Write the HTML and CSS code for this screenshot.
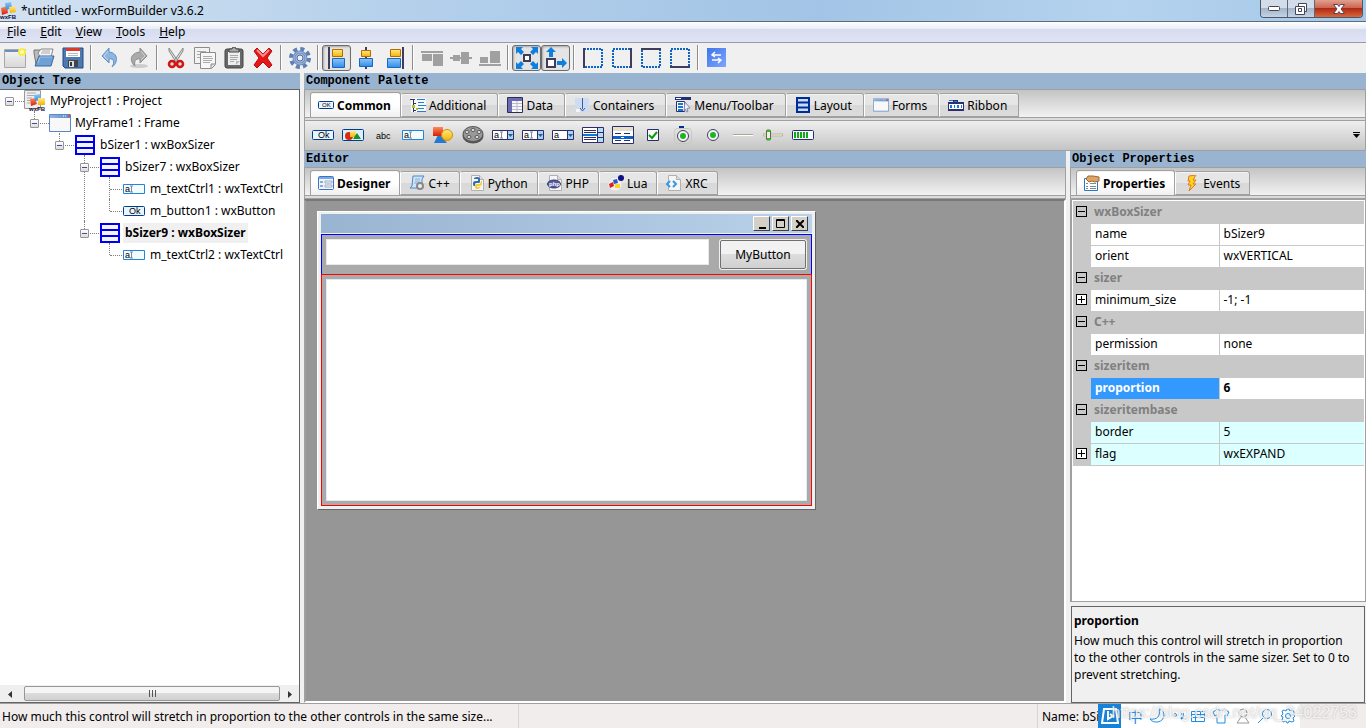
FILE: index.html
```html
<!DOCTYPE html>
<html lang="en">
<head>
  <meta charset="UTF-8">
  <meta name="viewport" content="width=device-width, initial-scale=1.0">
  <title>*untitled - wxFormBuilder v3.6.2</title>
  <link rel="stylesheet" href="styles.css">
</head>
<body>

  <!-- Icon sprite -->
  <svg class="sprite" width="0" height="0" aria-hidden="true">
    <defs>
      <linearGradient id="gBlue" x1="0" y1="0" x2="0" y2="1"><stop offset="0" stop-color="#8fc6f8"/><stop offset="1" stop-color="#2f8de8"/></linearGradient>
      <linearGradient id="gGold" x1="0" y1="0" x2="0" y2="1"><stop offset="0" stop-color="#ffe98a"/><stop offset="1" stop-color="#f5b400"/></linearGradient>
      <linearGradient id="gRed" x1="0" y1="0" x2="0" y2="1"><stop offset="0" stop-color="#ff8a5c"/><stop offset="1" stop-color="#d81e05"/></linearGradient>
      <linearGradient id="gPaper" x1="0" y1="0" x2="0" y2="1"><stop offset="0" stop-color="#f4f4f4"/><stop offset="1" stop-color="#d8d8d8"/></linearGradient>
      <linearGradient id="gWin" x1="0" y1="0" x2="1" y2="0"><stop offset="0" stop-color="#8fb4e0"/><stop offset="1" stop-color="#5c8cd0"/></linearGradient>
      <linearGradient id="gSwap" x1="0" y1="0" x2="1" y2="1"><stop offset="0" stop-color="#3f74e8"/><stop offset="1" stop-color="#7da6ff"/></linearGradient>
    </defs>
    <symbol id="logo" viewBox="0 0 18 18">
      <path d="M1 6l6-2 1 7-6 2z" fill="url(#gRed)"/><path d="M5 1l6-1 1 6-6 2z" fill="url(#gBlue)"/><path d="M9 5l6-1 1 6-6 1z" fill="url(#gGold)"/>
      <text x="0" y="17" class="logo-text">wxFB</text>
    </symbol>
    <symbol id="project" viewBox="0 0 22 22">
      <path d="M.5.500h16v18H.5z" fill="#eee" stroke="#999"/><path d="M3 3h9M3 5.500h11M3 8h5M3 10.500h3M3 13h3" stroke="#aaa"/>
      <path d="M6 9l5-1 2 6-6 2z" fill="url(#gRed)"/><path d="M10 5l6-1 1 6-6 1z" fill="url(#gBlue)"/><path d="M14 8h7v7h-7z" fill="url(#gGold)"/>
      <text x="5" y="21" class="logo-text">wxFB</text>
    </symbol>
    <symbol id="new" viewBox="0 0 22 20">
      <path d="M.5 1.500h21v18H.5z" fill="url(#gPaper)" stroke="#a8a8a8"/><path d="M1 2h17v2H1z" fill="#6c8fc0"/><circle cx="18" cy="4" r="4" fill="#f6ee4c"/><circle cx="18" cy="4" r="2" fill="#fffbb0"/>
    </symbol>
    <symbol id="open" viewBox="0 0 22 20">
      <path d="M1 5V2h6l1 2h3v12H3z" fill="#bbb" stroke="#777"/><path d="M5 5l3-4h12l-2 8H7z" fill="#f5f5f5" stroke="#888"/><path d="M9 3h8M8 5h9" stroke="#aaa"/><path d="M2 18l4-10h15l-3 10z" fill="#6fa0d4" stroke="#39699f"/><path d="M5 15l2-6h12" fill="none" stroke="#a4c6e8"/>
    </symbol>
    <symbol id="save" viewBox="0 0 22 22">
      <path d="M1 1h20v20H3l-2-2z" fill="#5079b0" stroke="#204a87"/><path d="M4 1h14v9H4z" fill="#fff"/><path d="M4 1h14v3H4z" fill="#dc3a2c"/><path d="M6 6.500h10M6 8.500h10" stroke="#bbb"/><path d="M6 13h10v7H6z" fill="#444"/><path d="M7 14h5v6H7z" fill="#ddd"/><path d="M8 15h2v4H8z" fill="#333"/>
    </symbol>
    <symbol id="undo" viewBox="0 0 20 22">
      <path d="M9 1L2 9l7 7v-4c5-1 6 3 3 8 6-4 7-14-3-15z" fill="#8fb5df" stroke="#5d8fc8"/><path d="M8 4L4 9l4 4" fill="none" stroke="#c4daf2"/>
    </symbol>
    <symbol id="redo" viewBox="0 0 22 22">
      <ellipse cx="11" cy="19" rx="9" ry="2" fill="#ccc"/><path d="M12 1l7 8-7 7v-4c-5-1-6 3-5 7-6-5-5-13 5-14z" fill="#aaa" stroke="#8b8b8b"/><path d="M13 4l4 5-4 4" fill="none" stroke="#d0d0d0"/>
    </symbol>
    <symbol id="cut" viewBox="0 0 20 22">
      <path d="M3 1l9 13-2 1L3 4zM17 1L8 14l2 1 7-11z" fill="#ddd" stroke="#888"/><ellipse cx="6" cy="17" rx="3" ry="3" fill="#f3d3d3" stroke="#cf1717" stroke-width="2.500"/><ellipse cx="14" cy="17" rx="3" ry="3" fill="#f3d3d3" stroke="#cf1717" stroke-width="2.500"/>
    </symbol>
    <symbol id="copy" viewBox="0 0 22 22">
      <path d="M.5.500h15v16H.5z" fill="#f2f2f2" stroke="#8c8c8c"/><path d="M3 4.500h9M3 7.500h3M3 10.500h3" stroke="#aaa"/><path d="M6.500 5.500h15v12l-4 4h-11z" fill="#f7f7f7" stroke="#8c8c8c"/><path d="M9 9.500h9M9 11.500h10M9 13.500h9M9 15.500h7" stroke="#aaa"/><path d="M17 21v-4h4" fill="#ddd" stroke="#8c8c8c"/>
    </symbol>
    <symbol id="paste" viewBox="0 0 20 22">
      <rect x="1" y="2" width="18" height="19" rx="2" fill="#686868" stroke="#444"/><path d="M4 5h12v13H4z" fill="#eee"/><path d="M6 8.500h8M6 10.500h8M6 12.500h7M6 14.500h4" stroke="#aaa"/><path d="M5 5V2h3l1-2h2l1 2h3v3z" fill="#aaa" stroke="#444"/><path d="M12 18v-4h4z" fill="#bbb"/>
    </symbol>
    <symbol id="delete" viewBox="0 0 20 22">
      <path d="M4 1l6 6 6-6 3 3-5 7 5 7-3 3-6-6-6 6-3-3 5-7-5-7z" fill="#e81717" stroke="#b50e0e"/><path d="M4 3l6 6 6-6" fill="none" stroke="#ff8f8f" stroke-width="2"/>
    </symbol>
    <symbol id="gear" viewBox="0 0 22 22">
      <circle cx="11" cy="11" r="9" fill="none" stroke="#5f7fb5" stroke-width="4" stroke-dasharray="4 3.070"/><circle cx="11" cy="11" r="6" fill="#a9bddd" stroke="#6d8cc0" stroke-width="3"/><circle cx="11" cy="11" r="6" fill="none" stroke="#a9bddd"/><circle cx="11" cy="11" r="3" fill="#f0f0f0" stroke="#4a6aa0"/>
    </symbol>
    <symbol id="al-left" viewBox="0 0 20 22"><path d="M2 0v22" stroke="#403c5c" stroke-width="2"/><path d="M5.500 2.500h10v7h-10z" fill="url(#gGold)" stroke="#b96a00"/><path d="M5.500 11.500h12v9h-12z" fill="url(#gBlue)" stroke="#1768c0"/></symbol>
    <symbol id="al-center" viewBox="0 0 20 22"><path d="M10 0v22" stroke="#403c5c" stroke-width="2"/><path d="M5.500 3.500h9v6h-9z" fill="url(#gGold)" stroke="#b96a00"/><path d="M3.500 11.500h13v8h-13z" fill="url(#gBlue)" stroke="#1768c0"/></symbol>
    <symbol id="al-right" viewBox="0 0 20 22"><path d="M18 0v22" stroke="#403c5c" stroke-width="2"/><path d="M5.500 2.500h10v7h-10z" fill="url(#gGold)" stroke="#b96a00"/><path d="M2.500 11.500h13v9h-13z" fill="url(#gBlue)" stroke="#1768c0"/></symbol>
    <symbol id="al-top" viewBox="0 0 22 22"><path d="M0 4h22v2H0zM1 7h10v7H1zM12 7h10v12H12z" fill="#a0a0a0"/></symbol>
    <symbol id="al-mid" viewBox="0 0 22 22"><path d="M0 10h22v2H0zM3 8h7v6H3zM11 5h8v12h-8z" fill="#a0a0a0"/></symbol>
    <symbol id="al-bottom" viewBox="0 0 22 22"><path d="M0 17h22v2H0zM1 10h8v6H1zM11 4h10v12H11z" fill="#a0a0a0"/></symbol>
    <symbol id="expand" viewBox="0 0 24 24">
      <path d="M9 9h6v6H9z" fill="#fff" stroke="#403c5c" stroke-width="2"/><path d="M1 1h7L6 3l3 3-3 3-3-3-2 2zM23 1v7l-2-2-3 3-3-3 3-3-2-2zM1 23v-7l2 2 3-3 3 3-3 3 2 2zM23 23h-7l2-2-3-3 3-3 3 3 2-2z" fill="#0d7fdc"/>
    </symbol>
    <symbol id="stretch" viewBox="0 0 24 24">
      <path d="M3 13h8v8H3z" fill="#fff" stroke="#403c5c" stroke-width="2"/><path d="M7 1l5 5H9v5H5V6H2zM23 17l-5 5v-3h-5v-4h5v-3z" fill="#0d7fdc"/>
    </symbol>
    <symbol id="dots" viewBox="0 0 20 20"><path d="M1 1h18v18H1z" fill="none" stroke="#0d62c8" stroke-width="2" stroke-dasharray="2 1"/></symbol>
    <symbol id="b-left" viewBox="0 0 20 20"><use href="#dots"/><path d="M1 0v20" stroke="#403c5c" stroke-width="2"/></symbol>
    <symbol id="b-right" viewBox="0 0 20 20"><use href="#dots"/><path d="M19 0v20" stroke="#403c5c" stroke-width="2"/></symbol>
    <symbol id="b-top" viewBox="0 0 20 20"><use href="#dots"/><path d="M0 1h20" stroke="#403c5c" stroke-width="2"/></symbol>
    <symbol id="b-bottom" viewBox="0 0 20 20"><use href="#dots"/><path d="M0 19h20" stroke="#403c5c" stroke-width="2"/></symbol>
    <symbol id="swap" viewBox="0 0 19 19"><path d="M0 0h19v19H0z" fill="url(#gSwap)"/><path d="M5 7h9M8 4L5 7l3 2M14 12H5M11 10l3 2-3 3" fill="none" stroke="#fff" stroke-width="1.500"/></symbol>

    <symbol id="frame" viewBox="0 0 22 18"><path d="M.5.500h21v17H.5z" fill="#f8f8f8" stroke="#5a86c4"/><path d="M1 1h20v3H1z" fill="url(#gWin)"/><path d="M14 2h1M16 2h1" stroke="#fff"/><path d="M19 1h2v2h-2z" fill="#e8502c"/></symbol>
    <symbol id="sizer" viewBox="0 0 20 20"><path d="M1 1h18v18H1zM1 7h18M1 13h18" fill="#f4f4ff" stroke="#0000f0" stroke-width="2"/></symbol>
    <symbol id="sizer-sm" viewBox="0 0 16 16"><path d="M2 1h12v14H2zM2 5.500h12M2 10.500h12" fill="#c8dcff" stroke="#002c96" stroke-width="2"/></symbol>
    <symbol id="ok" viewBox="0 0 22 10"><rect x=".5" y=".5" width="21" height="9" rx="1" fill="#e8f4ff" stroke="#003c8c"/><text x="6" y="8" class="glyph">Ok</text></symbol>
    <symbol id="ok-sm" viewBox="0 0 16 8"><rect x=".5" y=".5" width="15" height="7" rx="1" fill="#e8f4ff" stroke="#003c8c"/><text x="4" y="6" class="glyph-sm">OK</text></symbol>
    <symbol id="textctrl" viewBox="0 0 22 10"><path d="M.5.500h21v9H.5z" fill="#f4fbff" stroke="#1e86dc"/><text x="2" y="8" class="glyph">a</text><path d="M7 2l3 0M8.500 2v6M7 8h3" stroke="#888"/></symbol>
    <symbol id="bitmapbtn" viewBox="0 0 22 12"><rect x=".5" y=".5" width="21" height="11" rx="1" fill="#dcefff" stroke="#003c8c"/><circle cx="7" cy="7" r="4" fill="#d82c10"/><path d="M8 2h6v6H8z" fill="url(#gGold)"/><path d="M15 4l4 6h-8z" fill="#1c9020"/></symbol>
    <symbol id="abc" viewBox="0 0 22 12"><text x="4" y="10" class="glyph">abc</text></symbol>
    <symbol id="bitmap" viewBox="0 0 22 18"><path d="M7 7l8 10H2z" fill="#2478d8"/><path d="M1 1h10v9H1z" fill="url(#gRed)"/><circle cx="15" cy="9" r="5.500" fill="url(#gGold)" stroke="#d09000"/></symbol>
    <symbol id="reel" viewBox="0 0 22 18"><ellipse cx="11" cy="10" rx="10.500" ry="7.500" fill="#555"/><ellipse cx="11" cy="8" rx="10" ry="7.500" fill="#999" stroke="#555"/><g fill="#eee" stroke="#555"><ellipse cx="11" cy="4" rx="2" ry="1.500"/><ellipse cx="5" cy="6" rx="2" ry="1.500"/><ellipse cx="17" cy="6" rx="2" ry="1.500"/><ellipse cx="7" cy="11" rx="2" ry="1.500"/><ellipse cx="15" cy="11" rx="2" ry="1.500"/></g></symbol>
    <symbol id="combo" viewBox="0 0 22 10"><path d="M.5.500h21v9H.5z" fill="#fff" stroke="#2c2c6c"/><path d="M15 1h6v8h-6z" fill="#a8d4f4"/><path d="M15.500 1v8" stroke="#2c2c6c"/><path d="M16 4h5l-2.500 3z" fill="#2c5c8c"/><text x="2" y="8" class="glyph">a</text><path d="M8 2h3M9.500 2v6M8 8h3" stroke="#888"/></symbol>
    <symbol id="choice" viewBox="0 0 22 10"><path d="M.5.500h21v9H.5z" fill="#fff" stroke="#2c2c6c"/><path d="M15 1h6v8h-6z" fill="#a8d4f4"/><path d="M15.500 1v8" stroke="#2c2c6c"/><path d="M16 4h5l-2.500 3z" fill="#2c5c8c"/><text x="2" y="8" class="glyph">a</text></symbol>
    <symbol id="listbox" viewBox="0 0 22 16"><path d="M.5.500h21v15H.5z" fill="#fff" stroke="#2c2c6c"/><path d="M2 3.500h12M2 5.500h12M2 10.500h12M2 12.500h12" stroke="#2c2c6c"/><path d="M1 7h14v2H1z" fill="#0c78d8"/><path d="M15 1h6v14h-6z" fill="#b8dcf4"/><path d="M15.500 1v14M15 5.500h6M15 10.500h6" stroke="#2c2c6c"/></symbol>
    <symbol id="listctrl" viewBox="0 0 22 18"><path d="M.5.500h21v17H.5z" fill="#fff" stroke="#2c2c6c"/><path d="M1 1h20v4H1z" fill="#e4e0cc"/><path d="M3 7.500h6M12 7.500h6M3 14.500h6M12 14.500h6" stroke="#2c2c6c"/><path d="M1 10h20v3H1z" fill="#0c62c8"/><path d="M9 11.500h3" stroke="#fff"/></symbol>
    <symbol id="check" viewBox="0 0 12 12"><path d="M.5.500h11v11H.5z" fill="#f8f8f8" stroke="#2c2c6c"/><path d="M2 6l3 3 5-6" fill="none" stroke="#0b9a10" stroke-width="2"/></symbol>
    <symbol id="radiobox" viewBox="0 0 18 18"><rect x=".5" y="2.500" width="17" height="15" rx="3" fill="none" stroke="#ccc8b4"/><path d="M5 0h5v2H5z" fill="#002c96"/><circle cx="9" cy="10" r="5.500" fill="#f4f4f4" stroke="#3c3c6c"/><circle cx="9" cy="10" r="3" fill="#1fb420"/></symbol>
    <symbol id="radio" viewBox="0 0 12 12"><circle cx="6" cy="6" r="5.500" fill="#f4f4f4" stroke="#3c3c6c"/><circle cx="6" cy="6" r="3" fill="#1fb420"/></symbol>
    <symbol id="line" viewBox="0 0 20 2"><path d="M0 .5h20" stroke="#aca899"/><path d="M0 1.500h20" stroke="#fff"/></symbol>
    <symbol id="slider" viewBox="0 0 22 12"><path d="M1 6h20" stroke="#bab8a0" stroke-width="3"/><path d="M2 6h18" stroke="#f0eedc"/><rect x="4.500" y="1" width="4" height="10" rx="1" fill="#eee" stroke="#5c6c3c"/><path d="M5 2h3M5 10h3" stroke="#30c020" stroke-width="2"/></symbol>
    <symbol id="gauge" viewBox="0 0 22 10"><rect x=".5" y=".5" width="21" height="9" rx="1" fill="#f4f8ff" stroke="#2c2c6c"/><path d="M3 2v6M6 2v6M9 2v6M12 2v6M15 2v6" stroke="#15a815" stroke-width="2"/></symbol>

    <symbol id="tree" viewBox="0 0 16 16"><path d="M1 1h15v14H1z" fill="#f4f9ff"/><path d="M0 2.500h5M3.500 2v13M3 6.500h3M3 13.500h3" stroke="#335" fill="none"/><path d="M7 2.500h8M8 5.500h6M8 8.500h8M7 11.500h7M7 14.500h9" stroke="#2c7cc0"/><path d="M2 8h3v3H2zM6 11h2v2H6z" fill="#b8c020"/></symbol>
    <symbol id="grid" viewBox="0 0 16 16"><path d="M.5.500h15v15H.5z" fill="#f8f8ff" stroke="#302c50"/><path d="M1 1h14v3H1zM1 4h4v11H1z" fill="#6b6bb4"/><path d="M5 6.500h10M5 9.500h10M5 12.500h10M10 4v11" stroke="#bbc"/></symbol>
    <symbol id="splitter" viewBox="0 0 16 16"><path d="M1 1h14v14H1z" fill="#cddcf0"/><path d="M8.500 1v11" stroke="#3c5c9c"/><path d="M6 11l2.500 3 2.500-3" fill="none" stroke="#3c5c9c"/><path d="M2 12h4v3H2z" fill="#f4f4f4"/></symbol>
    <symbol id="menu" viewBox="0 0 16 16"><path d="M0 0h16v3H0z" fill="#203070"/><path d="M1 1h5v1H1z" fill="#fff"/><path d="M1.500 4.500h8v10h-8z" fill="#fff" stroke="#203070"/><path d="M3 7h5M3 10h5M3 13h5" stroke="#1c78d0" stroke-width="2"/><path d="M10 5l5 6-3 .5 1 3-1.500.5-1-3-1.500 2z" fill="#eef" stroke="#88a"/></symbol>
    <symbol id="ribbon" viewBox="0 0 16 12"><path d="M0 3h5V1h5v2h6v9H0z" fill="#302c70"/><path d="M1 1h4v1H1zM6 2h3v1H6z" fill="#1478e0"/><path d="M1 5h14v5H1z" fill="#fff"/><path d="M2 6h2v3H2zM6 6h1v3H6zM9 6h2v3H9zM13 6h1v3h-1z" fill="#1478e0"/></symbol>
    <symbol id="designer" viewBox="0 0 16 14"><rect x=".5" y=".5" width="15" height="13" rx="1" fill="#eef5ff" stroke="#3c72c0"/><path d="M1 1h14v2H1z" fill="#7aa8e4"/><path d="M2 6h3M2 10h3" stroke="#2c62b0"/><path d="M7 5h7v2H7zM7 9h7v2H7z" fill="#fff" stroke="#9ab"/></symbol>
    <symbol id="script" viewBox="0 0 16 16"><path d="M4 1h11l-2 3v9H1l2-2z" fill="#cfe4f8" stroke="#4f88c4"/><path d="M6 4h5M6 6h5M5 8h5" stroke="#8ab0d8"/><circle cx="11" cy="11" r="3" fill="#eee" stroke="#888" stroke-width="2"/></symbol>
    <symbol id="page" viewBox="0 0 16 16"><path d="M2.500.500h8l4 4v11h-12z" fill="#f5f5f5" stroke="#b0b0b0"/><path d="M10.500.500v4h4" fill="#ddd" stroke="#b0b0b0"/></symbol>
    <symbol id="python" viewBox="0 0 16 16"><use href="#page"/><path d="M4 9c0-3 1-3 5-3V4H5V3c3-2 6-1 6 1v3c0 1-1 1-4 1-1 0-1 2-1 3-1 0-2 0-2-2z" fill="#2f6fae"/><path d="M13 7c0 4-1 4-5 4v1h3v1c-3 2-5 1-5-1v-2c0-1 1-1 4-1 1 0 2-1 2-3 1 0 1 0 1 1z" fill="#f8cc30"/></symbol>
    <symbol id="php" viewBox="0 0 16 16"><use href="#page"/><ellipse cx="7" cy="9" rx="6.500" ry="4" fill="#555a9c" stroke="#35356c"/><text x="2" y="11" class="php-text">php</text></symbol>
    <symbol id="lua" viewBox="0 0 16 16"><circle cx="7" cy="9" r="7" fill="#f0f0f0" stroke="#ddd"/><circle cx="13" cy="3" r="3" fill="#101084"/><path d="M1 9l4-2 1 4-4 2z" fill="#e02020"/><path d="M5 5l4-1 1 4-4 1z" fill="#2858d0"/><path d="M7 9h5v4H7z" fill="#f8d820"/></symbol>
    <symbol id="xrc" viewBox="0 0 16 16"><use href="#page"/><path d="M4 6L1 9l3 3M7 6l3 3-3 3" fill="none" stroke="#3898e8" stroke-width="2"/></symbol>
    <symbol id="props" viewBox="0 0 16 16"><path d="M.5 3.500h13v12H.5z" fill="#fff" stroke="#2c78c0"/><path d="M2 8.500h2M6 8.500h6M2 11.500h2M6 11.500h6M2 13.500h2M6 13.500h6" stroke="#789"/><path d="M4 1l5 0 6 1v4l-4 1-3-1-3 1-3-3z" fill="#dca468" stroke="#9c6830"/></symbol>
    <symbol id="bolt" viewBox="0 0 16 16"><path d="M5 1l7-1-3 5h3L9 9h3l-7 7 2-6H4l2-4H4z" fill="#ffd21e" stroke="#e07a20"/></symbol>
  </svg>

  <header class="titlebar">
    <svg class="app-icon" width="18" height="18"><use href="#logo"/></svg>
    <h1>*untitled - wxFormBuilder v3.6.2</h1>
    <div class="window-btns">
      <button class="win-min" aria-label="Minimize"><svg width="12" height="5"><rect x=".5" y=".5" width="11" height="4" rx="1" fill="#fff" stroke="#445"/></svg></button>
      <button class="win-max" aria-label="Restore"><svg width="12" height="12"><path d="M3.500.500h8v8h-2v3h-9v-8h3z" fill="#fff" stroke="#445"/><path d="M3.500 5.500h3v3h-3zM3 3.500h6.500V9" fill="none" stroke="#445"/></svg></button>
      <button class="win-close" aria-label="Close"><svg width="12" height="10"><path d="M.5.500h4L6 2.500 7.500.500h4L8 5l3.500 4.500h-4L6 7.500 4.500 9.500h-4L4 5z" fill="#fff" stroke="#545"/></svg></button>
    </div>
  </header>

  <nav class="menubar">
    <a href="#"><u>F</u>ile</a>
    <a href="#"><u>E</u>dit</a>
    <a href="#"><u>V</u>iew</a>
    <a href="#"><u>T</u>ools</a>
    <a href="#"><u>H</u>elp</a>
  </nav>

  <div class="toolbar">
    <button aria-label="New"><svg width="22" height="20"><use href="#new"/></svg></button>
    <button aria-label="Open"><svg width="22" height="20"><use href="#open"/></svg></button>
    <button aria-label="Save"><svg width="22" height="22"><use href="#save"/></svg></button>
    <span class="sep"></span>
    <button aria-label="Undo"><svg width="20" height="22"><use href="#undo"/></svg></button>
    <button aria-label="Redo"><svg width="22" height="22"><use href="#redo"/></svg></button>
    <span class="sep"></span>
    <button aria-label="Cut"><svg width="20" height="22"><use href="#cut"/></svg></button>
    <button aria-label="Copy"><svg width="22" height="22"><use href="#copy"/></svg></button>
    <button aria-label="Paste"><svg width="20" height="22"><use href="#paste"/></svg></button>
    <button aria-label="Delete"><svg width="20" height="22"><use href="#delete"/></svg></button>
    <span class="sep"></span>
    <button aria-label="Generate code"><svg width="22" height="22"><use href="#gear"/></svg></button>
    <span class="sep"></span>
    <button class="pressed" aria-label="Align left"><svg width="20" height="22"><use href="#al-left"/></svg></button>
    <button aria-label="Align center"><svg width="20" height="22"><use href="#al-center"/></svg></button>
    <button aria-label="Align right"><svg width="20" height="22"><use href="#al-right"/></svg></button>
    <span class="sep"></span>
    <button disabled aria-label="Align top"><svg width="22" height="22"><use href="#al-top"/></svg></button>
    <button disabled aria-label="Align middle"><svg width="22" height="22"><use href="#al-mid"/></svg></button>
    <button disabled aria-label="Align bottom"><svg width="22" height="22"><use href="#al-bottom"/></svg></button>
    <span class="sep"></span>
    <button class="pressed" aria-label="Expand"><svg width="24" height="24"><use href="#expand"/></svg></button>
    <button class="pressed" aria-label="Stretch"><svg width="24" height="24"><use href="#stretch"/></svg></button>
    <span class="sep"></span>
    <button aria-label="Left border"><svg width="20" height="20"><use href="#b-left"/></svg></button>
    <button aria-label="Right border"><svg width="20" height="20"><use href="#b-right"/></svg></button>
    <button aria-label="Top border"><svg width="20" height="20"><use href="#b-top"/></svg></button>
    <button aria-label="Bottom border"><svg width="20" height="20"><use href="#b-bottom"/></svg></button>
    <span class="sep"></span>
    <button aria-label="Swap"><svg width="19" height="19"><use href="#swap"/></svg></button>
  </div>

  <main class="workspace">

    <!-- Object tree -->
    <section class="tree-pane">
      <h2 class="caption">Object Tree</h2>
      <div class="tree-box">
        <ul class="tree">
          <li>
            <div class="node"><button class="twist" aria-label="Collapse"></button><svg width="22" height="22"><use href="#project"/></svg><span>MyProject1 : Project</span></div>
            <ul>
              <li>
                <div class="node"><button class="twist" aria-label="Collapse"></button><svg width="22" height="18"><use href="#frame"/></svg><span>MyFrame1 : Frame</span></div>
                <ul>
                  <li>
                    <div class="node"><button class="twist" aria-label="Collapse"></button><svg width="22" height="20"><use href="#sizer"/></svg><span>bSizer1 : wxBoxSizer</span></div>
                    <ul>
                      <li>
                        <div class="node"><button class="twist" aria-label="Collapse"></button><svg width="22" height="20"><use href="#sizer"/></svg><span>bSizer7 : wxBoxSizer</span></div>
                        <ul>
                          <li><div class="node leaf"><svg width="22" height="10"><use href="#textctrl"/></svg><span>m_textCtrl1 : wxTextCtrl</span></div></li>
                          <li><div class="node leaf"><svg width="22" height="10"><use href="#ok"/></svg><span>m_button1 : wxButton</span></div></li>
                        </ul>
                      </li>
                      <li>
                        <div class="node selected"><button class="twist" aria-label="Collapse"></button><svg width="22" height="20"><use href="#sizer"/></svg><span>bSizer9 : wxBoxSizer</span></div>
                        <ul>
                          <li><div class="node leaf"><svg width="22" height="10"><use href="#textctrl"/></svg><span>m_textCtrl2 : wxTextCtrl</span></div></li>
                        </ul>
                      </li>
                    </ul>
                  </li>
                </ul>
              </li>
            </ul>
          </li>
        </ul>
        <div class="hscroll">
          <button aria-label="Scroll left"><svg width="4" height="7"><path d="M4 0v7L0 3.500z" fill="#333"/></svg></button>
          <div class="thumb"><i></i><i></i><i></i></div>
          <button aria-label="Scroll right"><svg width="4" height="7"><path d="M0 0v7l4-3.500z" fill="#333"/></svg></button>
        </div>
      </div>
    </section>

    <div class="right-side">

      <!-- Component palette -->
      <section class="palette">
        <h2 class="caption">Component Palette</h2>
        <div class="tabs">
          <button class="tab active"><svg width="16" height="8"><use href="#ok-sm"/></svg>Common</button>
          <button class="tab"><svg width="16" height="16"><use href="#tree"/></svg>Additional</button>
          <button class="tab"><svg width="16" height="16"><use href="#grid"/></svg>Data</button>
          <button class="tab"><svg width="16" height="16"><use href="#splitter"/></svg>Containers</button>
          <button class="tab"><svg width="16" height="16"><use href="#menu"/></svg>Menu/Toolbar</button>
          <button class="tab"><svg width="16" height="16"><use href="#sizer-sm"/></svg>Layout</button>
          <button class="tab"><svg width="16" height="14"><use href="#frame"/></svg>Forms</button>
          <button class="tab"><svg width="16" height="12"><use href="#ribbon"/></svg>Ribbon</button>
        </div>
        <div class="widgets">
          <button aria-label="wxButton"><svg width="22" height="10"><use href="#ok"/></svg></button>
          <button aria-label="wxBitmapButton"><svg width="22" height="12"><use href="#bitmapbtn"/></svg></button>
          <button aria-label="wxStaticText"><svg width="22" height="12"><use href="#abc"/></svg></button>
          <button aria-label="wxTextCtrl"><svg width="22" height="10"><use href="#textctrl"/></svg></button>
          <button aria-label="wxStaticBitmap"><svg width="22" height="18"><use href="#bitmap"/></svg></button>
          <button aria-label="wxAnimationCtrl"><svg width="22" height="18"><use href="#reel"/></svg></button>
          <button aria-label="wxComboBox"><svg width="22" height="10"><use href="#combo"/></svg></button>
          <button aria-label="wxBitmapComboBox"><svg width="22" height="10"><use href="#combo"/></svg></button>
          <button aria-label="wxChoice"><svg width="22" height="10"><use href="#choice"/></svg></button>
          <button aria-label="wxListBox"><svg width="22" height="16"><use href="#listbox"/></svg></button>
          <button aria-label="wxListCtrl"><svg width="22" height="18"><use href="#listctrl"/></svg></button>
          <button aria-label="wxCheckBox"><svg width="12" height="12"><use href="#check"/></svg></button>
          <button aria-label="wxRadioBox"><svg width="18" height="18"><use href="#radiobox"/></svg></button>
          <button aria-label="wxRadioButton"><svg width="12" height="12"><use href="#radio"/></svg></button>
          <button aria-label="wxStaticLine"><svg width="20" height="2"><use href="#line"/></svg></button>
          <button aria-label="wxSlider"><svg width="22" height="12"><use href="#slider"/></svg></button>
          <button aria-label="wxGauge"><svg width="22" height="10"><use href="#gauge"/></svg></button>
          <button class="more" aria-label="More"><svg width="7" height="6"><path d="M0 0h7v1H0zM0 2h7L3.500 6z" fill="#000"/></svg></button>
        </div>
      </section>

      <div class="lower">

        <!-- Editor -->
        <section class="editor">
          <h2 class="caption">Editor</h2>
          <div class="tabs">
            <button class="tab active"><svg width="16" height="14"><use href="#designer"/></svg>Designer</button>
            <button class="tab"><svg width="16" height="16"><use href="#script"/></svg>C++</button>
            <button class="tab"><svg width="16" height="16"><use href="#python"/></svg>Python</button>
            <button class="tab"><svg width="16" height="16"><use href="#php"/></svg>PHP</button>
            <button class="tab"><svg width="16" height="16"><use href="#lua"/></svg>Lua</button>
            <button class="tab"><svg width="16" height="16"><use href="#xrc"/></svg>XRC</button>
          </div>
          <div class="canvas">
            <div class="form">
              <div class="form-title">
                <button aria-label="Minimize form"><svg width="8" height="10"><path d="M1 8h7v2H1z"/></svg></button>
                <button aria-label="Maximize form"><svg width="9" height="9"><path d="M.5.500h8v8h-8zM0 1.500h9" fill="none" stroke="#000"/></svg></button>
                <button aria-label="Close form"><svg width="8" height="8"><path d="M0 0l8 8M8 0L0 8" stroke="#000" stroke-width="2"/></svg></button>
              </div>
              <div class="sizer-h">
                <input type="text" aria-label="m_textCtrl1">
                <button>MyButton</button>
              </div>
              <div class="sizer-v">
                <textarea aria-label="m_textCtrl2"></textarea>
              </div>
            </div>
          </div>
        </section>

        <!-- Properties -->
        <section class="inspector">
          <h2 class="caption">Object Properties</h2>
          <div class="tabs">
            <button class="tab active"><svg width="16" height="16"><use href="#props"/></svg>Properties</button>
            <button class="tab"><svg width="16" height="16"><use href="#bolt"/></svg>Events</button>
          </div>
          <div class="grid-box">
            <table class="props">
              <colgroup><col class="col-mark"><col class="col-name"><col></colgroup>
              <tr class="group"><td><button class="box" aria-label="Collapse"></button></td><th colspan="2">wxBoxSizer</th></tr>
              <tr><td></td><th>name</th><td>bSizer9</td></tr>
              <tr><td></td><th>orient</th><td>wxVERTICAL</td></tr>
              <tr class="group"><td><button class="box" aria-label="Collapse"></button></td><th colspan="2">sizer</th></tr>
              <tr><td><button class="box plus" aria-label="Expand"></button></td><th>minimum_size</th><td>-1; -1</td></tr>
              <tr class="group"><td><button class="box" aria-label="Collapse"></button></td><th colspan="2">C++</th></tr>
              <tr><td></td><th>permission</th><td>none</td></tr>
              <tr class="group"><td><button class="box" aria-label="Collapse"></button></td><th colspan="2">sizeritem</th></tr>
              <tr class="current"><td></td><th>proportion</th><td>6</td></tr>
              <tr class="group"><td><button class="box" aria-label="Collapse"></button></td><th colspan="2">sizeritembase</th></tr>
              <tr class="tinted"><td></td><th>border</th><td>5</td></tr>
              <tr class="tinted"><td><button class="box plus" aria-label="Expand"></button></td><th>flag</th><td>wxEXPAND</td></tr>
            </table>
          </div>
          <div class="help">
            <h3>proportion</h3>
            <p>How much this control will stretch in proportion to the other controls in the same sizer. Set to 0 to prevent stretching.</p>
          </div>
        </section>

      </div>
    </div>
  </main>

  <footer class="statusbar">
    <span class="status-text">How much this control will stretch in proportion to the other controls in the same size...</span>
    <span class="status-name">Name: bSizer9</span>
    <div class="ime">
      <span class="ime-logo"><svg width="18" height="18"><path d="M3 2h12l2 14H1z" fill="none" stroke="#fff" stroke-width="2"/><path d="M7 4v8l5-3-3-2" fill="none" stroke="#fff" stroke-width="2"/></svg></span>
      <span class="ime-lang">中</span>
      <svg width="16" height="16"><path d="M10 1c2 8-3 11-9 10 3 5 14 4 14-4 0-3-2-5-5-6z" fill="none" stroke="#1d8de8"/></svg>
      <svg width="12" height="16"><circle cx="3" cy="7" r="1.500" fill="none" stroke="#1d8de8"/><path d="M9 6h2v3l-2 2" fill="none" stroke="#1d8de8" stroke-width="2"/></svg>
      <svg width="14" height="16"><path d="M.5 3.500h13v10H.5zM1 6.500h12M1 9.500h12M4.500 3v10M9.500 3v7" fill="none" stroke="#1d8de8"/></svg>
      <svg width="18" height="16"><path d="M6 1c1 2 5 2 6 0l5 3-2 4-2-1v8H5V7L3 8 1 4z" fill="none" stroke="#1d8de8"/></svg>
      <svg width="14" height="16"><circle cx="7" cy="5" r="4" fill="none" stroke="#999"/><path d="M5 9l-4 6h12L9 9" fill="none" stroke="#999"/></svg>
      <svg width="16" height="16"><circle cx="10" cy="6" r="4.500" fill="none" stroke="#1d8de8"/><path d="M7 9l-6 6" stroke="#1d8de8"/></svg>
      <svg width="16" height="16"><path d="M7 1h2l1 2 3-1 1 2-1 3 2 1-2 2 1 3-2 1-3-1-1 2H7l-1-2-3 1-1-2 1-3-2-1 2-2-1-3 2-1 2 1z" fill="none" stroke="#1d8de8"/><circle cx="8" cy="8" r="2.500" fill="none" stroke="#1d8de8"/></svg>
    </div>
    <span class="watermark">https://blog.csdn.net/qq_34022753</span>
  </footer>

</body>
</html>
```
FILE: styles.css
```css
* {
  box-sizing: border-box;
  margin: 0;
  padding: 0;
}

body {
  display: flex;
  flex-direction: column;
  height: 100vh;
  overflow: hidden;
  font-family: "Noto Sans", "Open Sans", "Noto Sans CJK SC", sans-serif;
  font-size: 12px;
  line-height: 17px;
  color: #000;
  background: #f0f0f0;
}

button {
  font: inherit;
  color: inherit;
  border: none;
  background: none;
}

svg {
  flex: none;
}

.sprite {
  position: absolute;
}

.logo-text {
  font: bold 6px "Liberation Sans", sans-serif;
  fill: #101040;
}

.glyph {
  font: 9px "Liberation Sans", sans-serif;
}

.glyph-sm {
  font: 6px "Liberation Sans", sans-serif;
}

.php-text {
  font: bold 6px "Liberation Sans", sans-serif;
  fill: #fff;
}

/* Title bar */
.titlebar {
  display: flex;
  align-items: center;
  height: 22px;
  flex: none;
  padding-right: 3px;
  background: linear-gradient(to right, #d3e2f1, #b4d0eb 30%, #a3c4e6 60%, #b5d3ee 82%, #a5c7e9);
  border-bottom: 1px solid #5d6b7c;
}

.titlebar h1 {
  flex: 1;
  padding-left: 3px;
  font-size: 12px;
  font-weight: normal;
}

.window-btns {
  display: flex;
  align-self: flex-start;
  height: 18px;
  border: 1px solid #4a5868;
  border-top: none;
  border-radius: 0 0 4px 4px;
  overflow: hidden;
}

.window-btns button {
  display: flex;
  align-items: center;
  justify-content: center;
  width: 27px;
  background: linear-gradient(#d3dde9 45%, #a5b6ca 50%, #c3d3e5);
  border-right: 1px solid #5a6878;
}

.window-btns .win-close {
  width: 47px;
  border-right: none;
  background: linear-gradient(#e0a090, #cf6652 45%, #b02a12 50%, #d8683c);
}

/* Menu */
.menubar {
  display: flex;
  align-items: center;
  height: 21px;
  flex: none;
  padding-bottom: 1px;
  background: linear-gradient(#fff, #e8ecf6 35%, #d6dcef 36%, #dfe4f5);
  border-bottom: 1px solid #9a9aa4;
}

.menubar a {
  padding: 0 7px;
  color: #000;
  text-decoration: none;
}

/* Toolbar */
.toolbar {
  display: flex;
  align-items: center;
  height: 30px;
  flex: none;
  padding-bottom: 1px;
}

.toolbar button {
  display: flex;
  align-items: center;
  justify-content: center;
  width: 29px;
  height: 26px;
}

.toolbar .pressed {
  border: 1px solid #6c6c6c;
  border-radius: 3px;
  background: #e4e4e4;
  box-shadow: inset 1px 1px 2px #aaa;
}

.sep {
  width: 2px;
  height: 25px;
  margin: 0 3px;
  background: #8c8c8c;
  border-right: 1px solid #fff;
}

/* Panes */
.workspace {
  display: flex;
  flex: 1;
  min-height: 0;
  gap: 4px;
}

.caption {
  height: 16px;
  flex: none;
  padding-left: 2px;
  background: #99b4d1;
  font: bold 12px/17px "Liberation Mono", monospace;
}

.tree-pane {
  display: flex;
  flex-direction: column;
  width: 300px;
}

.tree-box {
  display: flex;
  flex-direction: column;
  flex: 1;
  border: 1px solid #646464;
  border-left: none;
  background: #fff;
}

.tree {
  flex: 1;
}

.tree ul {
  padding-left: 25px;
}

.tree li {
  position: relative;
  list-style: none;
}

.tree li li::before {
  content: "";
  position: absolute;
  left: 9px;
  top: -1px;
  height: 100%;
  border-left: 1px dotted #808080;
}

.tree li li:last-child::before {
  height: 12px;
}

.node {
  position: relative;
  display: flex;
  align-items: center;
  height: 22px;
  gap: 2px;
  padding-left: 5px;
}

.node::before {
  content: "";
  position: absolute;
  left: 10px;
  top: 11px;
  width: 14px;
  border-top: 1px dotted #808080;
}

.node.leaf {
  padding-left: 23px;
}

.node span {
  padding: 0 2px;
  line-height: 20px;
  white-space: nowrap;
}

.node.leaf span {
  padding-left: 3px;
}

.node svg {
  position: relative;
}

.selected span {
  background: #f0f0f0;
  font-weight: bold;
}

.twist {
  position: relative;
  width: 9px;
  height: 9px;
  margin-right: 8px;
  border: 1px solid #969696;
  border-radius: 1px;
  background: linear-gradient(#3a4fa0, #3a4fa0) center / 5px 1px no-repeat, linear-gradient(#fff, #dcdcdc);
}

.hscroll {
  display: flex;
  height: 17px;
  background: #efefef;
}

.hscroll button {
  width: 19px;
  flex: none;
  line-height: 10px;
}

.thumb {
  display: flex;
  align-items: center;
  justify-content: center;
  gap: 2px;
  flex: 1;
  margin: 1px 0 1px 5px;
  border: 1px solid #979797;
  border-radius: 2px;
  background: linear-gradient(#f5f5f5 45%, #dcdcdc 50%, #d0d0d0);
}

.thumb i {
  width: 1px;
  height: 7px;
  background: #555;
}

.right-side {
  display: flex;
  flex-direction: column;
  flex: 1;
  min-width: 0;
}

/* Tabs */
.tabs {
  display: flex;
  align-items: flex-end;
  height: 32px;
  flex: none;
  padding-left: 5px;
  background: linear-gradient(#c4c4c4, #f2f2f2 27px, #a0a0a0 27px, #a0a0a0 28px, #dcdcdc 28px);
  border: 1px solid #a0a0a0;
}

.tab {
  display: flex;
  align-items: center;
  gap: 3px;
  height: 24px;
  margin-bottom: 3px;
  padding: 0 11px 0 8px;
  border: 1px solid #a0a0a0;
  border-left-color: #fff;
  border-radius: 3px 3px 0 0;
  background: linear-gradient(#e6e6e6 48%, #d8d8d8 50%, #dcdcdc);
  box-shadow: inset 0 1px #f4f4f4;
}

.editor .tab,
.inspector .tab {
  padding-right: 9px;
}

.tabs .tab.active {
  height: 25px;
  padding: 0 9px 0 7px;
  border-left-color: #a0a0a0;
  border-bottom: none;
  background: linear-gradient(#fff 50%, #f0f0f0);
  font-weight: bold;
}

.widgets {
  display: flex;
  height: 30px;
  padding: 0 0 2px 3px;
  background: linear-gradient(#efefef, #c4c4c4);
  border: 1px solid #a0a0a0;
  border-top: none;
}

.widgets button {
  display: flex;
  align-items: center;
  justify-content: center;
  width: 30px;
}

.widgets .more {
  width: 17px;
  margin-left: auto;
}

.lower {
  display: flex;
  flex: 1;
  min-height: 0;
  gap: 4px;
}

/* Editor */
.editor {
  display: flex;
  flex-direction: column;
  flex: 1;
  min-width: 0;
}

.canvas {
  flex: 1;
  padding: 10px 11px;
  background: #969696;
  border: 2px solid #a0a0a0;
  border-top-color: #787878;
  border-right-color: #fff;
  border-bottom-color: #fff;
}

.form {
  display: flex;
  flex-direction: column;
  width: 499px;
  height: 299px;
  padding: 2px 3px 3px;
  background: #f0f0f0;
  border: 1px solid #fff;
  border-right-color: #646464;
  border-bottom-color: #646464;
}

.form-title {
  display: flex;
  align-items: center;
  justify-content: flex-end;
  height: 20px;
  flex: none;
  gap: 2px;
  padding-right: 4px;
  background: linear-gradient(to right, #99b4d1, #b9d1ea);
  border-bottom: 1px solid #f0f0f0;
}

.form-title button {
  display: flex;
  align-items: center;
  justify-content: center;
  width: 17px;
  height: 15px;
  background: #d4d0c8;
  border: 1px solid #fff;
  border-right-color: #404040;
  border-bottom-color: #404040;
}

.sizer-h {
  display: flex;
  align-items: flex-start;
  gap: 10px;
  height: 40px;
  flex: none;
  padding: 4px;
  background: #aaa;
  border: 1px solid #0000ff;
  border-bottom: none;
}

.sizer-h input,
.sizer-v textarea {
  flex: 1;
  min-width: 0;
  border: 1px solid #e3e9ef;
  background: #fff;
  resize: none;
}

.sizer-h input {
  height: 26px;
}

.sizer-h button {
  width: 88px;
  height: 31px;
  border: 2px solid #f0f0f0;
  border-radius: 3px;
  outline: 1px solid #707070;
  outline-offset: -2px;
  background: linear-gradient(#f2f2f2 48%, #dddddd 50%, #d0d0d0);
}

.sizer-v {
  display: flex;
  flex: 1;
  padding: 4px;
  background: #aaa;
  border: 1px solid #ff0000;
}

/* Properties */
.inspector {
  display: flex;
  flex-direction: column;
  width: 296px;
}

.grid-box {
  flex: 1;
  margin-bottom: 4px;
  padding: 1px;
  border: 1px solid #a0a0a0;
  border-left-width: 2px;
  background: #fff;
}

.props {
  width: 100%;
  table-layout: fixed;
  border-collapse: collapse;
}

.col-mark {
  width: 18px;
}

.col-name {
  width: 128px;
}

.props tr {
  height: 22px;
}

.props td,
.props th {
  padding: 0 0 1px 4px;
  border-bottom: 1px solid #c8c8c8;
  text-align: left;
  font-weight: normal;
}

.props td:first-child {
  padding-left: 3px;
  background: #c8c8c8;
  line-height: 10px;
}

.props th + td {
  border-left: 1px solid #c8c8c8;
}

.props .group th {
  padding-left: 3px;
  background: #c8c8c8;
  color: #808080;
  font-weight: bold;
}

.current th {
  background: #3399ff;
  color: #fff;
}

.props .current th,
.props .current td {
  font-weight: bold;
}

.tinted th,
.tinted th + td {
  background: #dcffff;
}

.box {
  width: 11px;
  height: 11px;
  border: 1px solid #000;
  background: linear-gradient(#000, #000) center / 7px 1px no-repeat;
}

.box.plus {
  background: linear-gradient(#000, #000) center / 7px 1px no-repeat, linear-gradient(#000, #000) center / 1px 7px no-repeat, #fff;
}

.help {
  height: 97px;
  margin: 0 1px;
  padding: 5px 12px 5px 2px;
  border: 1px solid #646464;
}

.help h3 {
  margin-bottom: 3px;
  font-size: 12px;
  line-height: 17px;
}

/* Status bar */
.statusbar {
  position: relative;
  display: flex;
  height: 25px;
  flex: none;
  background: #f1edec;
  border-top: 1px solid #a0a0a0;
  line-height: 25px;
  white-space: nowrap;
}

.status-text {
  width: 519px;
  padding-left: 2px;
  border-right: 1px solid #d8d4d4;
}

.status-name {
  width: 329px;
  margin-left: auto;
  padding-left: 4px;
  border-left: 1px solid #d8d4d4;
}

.ime {
  position: absolute;
  right: 66px;
  bottom: 0;
  display: flex;
  align-items: center;
  justify-content: space-between;
  width: 202px;
  height: 24px;
  padding-right: 4px;
  background: #fff;
}

.ime-logo {
  display: flex;
  align-items: center;
  justify-content: center;
  width: 23px;
  height: 24px;
  background: #1683d8;
}

.ime-lang {
  color: #1d8de8;
  font-size: 15px;
}

.watermark {
  position: absolute;
  right: 9px;
  bottom: 5px;
  font: 16px/20px "Liberation Sans", sans-serif;
  color: rgba(255, 255, 255, 0.8);
  text-shadow: 0 0 2px rgba(120, 120, 120, 0.6);
}
```
